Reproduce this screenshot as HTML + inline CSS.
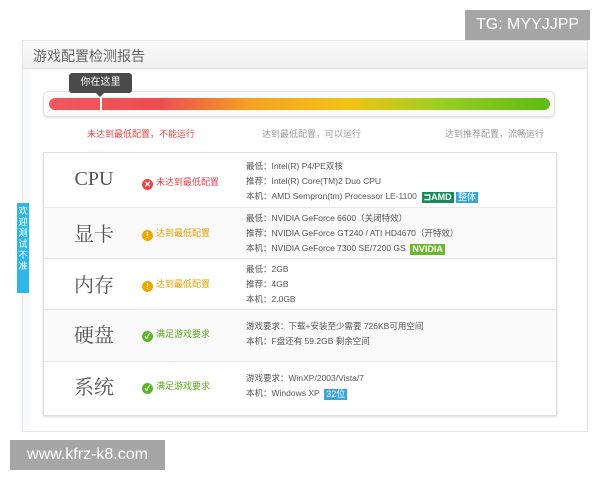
<!DOCTYPE html>
<html><head><meta charset="utf-8"><style>
*{margin:0;padding:0;box-sizing:border-box}
body{width:600px;height:480px;background:#fff;position:relative;overflow:hidden;font-family:"Liberation Sans","Noto Sans CJK SC",sans-serif;}
.abs{position:absolute}
.panel{left:22px;top:40px;width:566px;height:392px;border:1px solid #e6e6e6;background:#f9fafb}
.head{left:23px;top:41px;width:564px;height:28px;background:linear-gradient(#fafafa,#efefef);border-bottom:1px solid #e0e0e0;font-size:14px;color:#666;padding:5px 0 0 10px}
.inner{left:30px;top:69px;width:556px;height:362px;background:#fff}
.barwrap{left:43px;top:91px;width:512px;height:26px;border:1px solid #e2e2e2;border-radius:5px;background:#fafafa;box-shadow:0 1px 2px #ddd}
.bar{left:49px;top:98px;width:501px;height:12px;border-radius:6px;background:linear-gradient(90deg,#ef5a5f 0%,#ee4c50 22%,#f5a023 40%,#f3c416 60%,#9bce24 78%,#5dbb12 100%)}
.tip{left:69px;top:73px;width:63px;height:20px;background:#4a4a4a;border-radius:3px;color:#fff;font-size:10px;text-align:center;line-height:20px}
.tipa{left:96px;top:93px;border:4px solid transparent;border-top-color:#4a4a4a}
.lbl{top:127px;font-size:9px;color:#999}
.table{left:43px;top:152px;width:514px;height:264px;border:1px solid #dedede;background:#fff;box-shadow:0 1px 2px #ddd}
.row{position:absolute;left:0;width:512px;border-bottom:1px solid #e8e8e8}
.name{position:absolute;left:0;width:100px;text-align:center;font-family:"Liberation Serif","Noto Serif CJK SC",serif;font-size:20px;color:#555}
.st{position:absolute;left:98px;font-size:9px}
.ic{display:inline-block;width:11px;height:11px;border-radius:50%;color:#fff;font-size:8px;line-height:11px;text-align:center;margin-right:3px;vertical-align:-2px;font-weight:bold}
.det{position:absolute;left:202px;font-size:8.5px;color:#555;line-height:15px}
.tag{display:inline-block;color:#fff;font-weight:bold;font-size:9px;padding:0 2px;line-height:11px;vertical-align:-1px}
.wm{background:#a6a6a6;color:#fff;font-size:16px}
</style></head><body>
<div class="abs panel"></div>
<div class="abs head">游戏配置检测报告</div>
<div class="abs inner"></div>
<div class="abs barwrap"></div>
<div class="abs bar"></div>
<div class="abs" style="left:100px;top:97px;width:2px;height:14px;background:#fff"></div>
<div class="abs tip">你在这里</div>
<div class="abs tipa"></div>
<div class="abs lbl" style="left:87px;color:#e04545">未达到最低配置，不能运行</div>
<div class="abs lbl" style="left:262px">达到最低配置，可以运行</div>
<div class="abs lbl" style="left:445px">达到推荐配置，流畅运行</div>
<div class="abs table">
 <div class="row" style="top:0;height:55px">
  <div class="name" style="top:15px">CPU</div>
  <div class="st" style="top:22px;color:#e0454f"><span class="ic" style="background:#e04a4a">✕</span>未达到最低配置</div>
  <div class="det" style="top:6px">最低：Intel(R) P4/PE双核<br>推荐：Intel(R) Core(TM)2 Duo CPU<br>本机：AMD Sempron(tm) Processor LE-1100 &nbsp;<span class="tag" style="background:#1a8a5a">⊐AMD</span> <span class="tag" style="background:#3aa6d8;font-weight:normal">整体</span></div>
 </div>
 <div class="row" style="top:55px;height:51px;background:#fafafa">
  <div class="name" style="top:10px">显卡</div>
  <div class="st" style="top:18px;color:#e0a000"><span class="ic" style="background:#f0a800">!</span>达到最低配置</div>
  <div class="det" style="top:3px">最低：NVIDIA GeForce 6600（关闭特效）<br>推荐：NVIDIA GeForce GT240 / ATI HD4670（开特效）<br>本机：NVIDIA GeForce 7300 SE/7200 GS &nbsp;<span class="tag" style="background:#6cb52d">NVIDIA</span></div>
 </div>
 <div class="row" style="top:106px;height:51px">
  <div class="name" style="top:10px">内存</div>
  <div class="st" style="top:18px;color:#e0a000"><span class="ic" style="background:#f0a800">!</span>达到最低配置</div>
  <div class="det" style="top:3px">最低：2GB<br>推荐：4GB<br>本机：2.0GB</div>
 </div>
 <div class="row" style="top:157px;height:52px;background:#fafafa">
  <div class="name" style="top:9px">硬盘</div>
  <div class="st" style="top:17px;color:#5ba820"><span class="ic" style="background:#5cb82a">✓</span>满足游戏要求</div>
  <div class="det" style="top:9px">游戏要求：下载+安装至少需要 726KB可用空间<br>本机：F盘还有 59.2GB 剩余空间</div>
 </div>
 <div class="row" style="top:209px;height:53px;border-bottom:none">
  <div class="name" style="top:9px">系统</div>
  <div class="st" style="top:17px;color:#5ba820"><span class="ic" style="background:#5cb82a">✓</span>满足游戏要求</div>
  <div class="det" style="top:9px">游戏要求：WinXP/2003/Vista/7<br>本机：Windows XP &nbsp;<span class="tag" style="background:#3aa6d8;font-weight:normal">32位</span></div>
 </div>
</div>
<div class="abs" style="left:17px;top:203px;width:12px;height:90px;background:#2fb7e8;color:#fff;font-size:9px;line-height:11px;text-align:center;padding-top:3px">欢迎测试不准</div>
<div class="abs wm" style="left:465px;top:10px;width:125px;height:30px;line-height:30px;text-align:center">TG: MYYJJPP</div>
<div class="abs wm" style="left:10px;top:440px;width:155px;height:30px;line-height:30px;text-align:center">www.kfrz-k8.com</div>
</body></html>
